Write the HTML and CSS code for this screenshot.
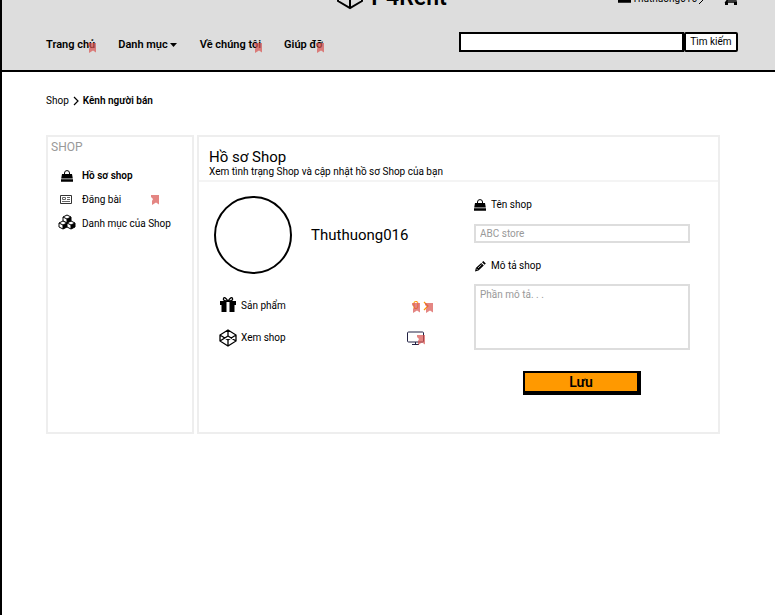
FILE: index.html
```html
<!DOCTYPE html>
<html lang="vi">
<head>
<meta charset="utf-8">
<meta name="viewport" content="width=device-width, initial-scale=1">
<title>Kênh người bán</title>
<link rel="stylesheet" href="styles.css">
</head>
<body>
<svg class="defs" aria-hidden="true">
  <symbol id="mark" viewBox="0 0 8 10"><path d="M0 0h8v9.500L5 7.500 1 10V6l1-2-2-2z"/></symbol>
  <symbol id="bag" viewBox="0 0 12 12"><path d="M1 4h10l.8 4.500H.2zM0 9.200h12v2.500H0z"/><path d="M3.500 5.500V3q0-2.400 2.500-2.400T8.500 3v2.500" fill="none" stroke="currentColor"/></symbol>
</svg>
<div class="page">
  <header class="header">
    <div class="topbar">
      <a class="brand" href="#">
        <svg class="brand-icon" viewBox="0 0 26 28" aria-hidden="true"><path d="M13 1l12 7v12l-12 7-12-7V8zM1 8l12 7 12-7M13 15v12" fill="none" stroke="currentColor" stroke-width="2"/></svg>
        <span>P4Rent</span>
      </a>
      <div class="account">
        <a class="user" href="#"><svg class="user-bag" aria-hidden="true"><use href="#bag"/></svg>Thuthuong016<svg class="user-next" viewBox="0 0 6 10" aria-hidden="true"><path d="M1 1l4 4-4 4" fill="none" stroke="currentColor"/></svg></a>
        <a href="#" aria-label="Giỏ hàng"><svg class="cart" viewBox="0 0 14 14" aria-hidden="true"><path d="M0 1h3l1 8h8l1-6H3M3.500 9L2 11h11" fill="none" stroke="currentColor" stroke-width="1.500"/><path d="M1 11h3v3H1zM10 11h3v3h-3z"/></svg></a>
      </div>
    </div>
    <div class="navbar">
      <nav class="nav">
        <a href="#">Trang chủ<svg class="mark over" aria-hidden="true"><use href="#mark"/></svg></a>
        <a href="#">Danh mục<svg class="caret" viewBox="0 0 7 4" aria-hidden="true"><path d="M0 0h7L3.500 4z"/></svg></a>
        <a href="#">Về chúng tôi<svg class="mark over" aria-hidden="true"><use href="#mark"/></svg></a>
        <a href="#">Giúp đỡ<svg class="mark over" aria-hidden="true"><use href="#mark"/></svg></a>
      </nav>
      <form class="search">
        <input type="search" aria-label="Tìm kiếm">
        <button type="button">Tìm kiếm</button>
      </form>
    </div>
  </header>

  <nav class="crumbs" aria-label="Breadcrumb">
    <a href="#">Shop</a>
    <svg class="crumb-sep" viewBox="0 0 6 10" aria-hidden="true"><path d="M1 1l4 4-4 4" fill="none" stroke="currentColor" stroke-width="1.200"/></svg>
    <strong>Kênh người bán</strong>
  </nav>

  <div class="columns">
    <aside class="panel side">
      <h2>SHOP</h2>
      <ul>
        <li><svg class="icon small" aria-hidden="true"><use href="#bag"/></svg><a class="current" href="#">Hồ sơ shop</a></li>
        <li><svg class="icon" viewBox="0 0 18 18" aria-hidden="true"><path d="M2.500 4.500h11v8h-11z" fill="none" stroke="#333"/><path d="M4.500 6.500h3v2h-3zM9 6.500h3M9 8.500h3M4 10.500h8" fill="none" stroke="#666"/></svg><a href="#">Đăng bài</a><svg class="mark trailing" aria-hidden="true"><use href="#mark"/></svg></li>
        <li><svg class="icon" viewBox="0 0 18 18" aria-hidden="true"><g fill="#fff" stroke="currentColor"><path id="cube" d="M9 0l4 2v4L9 8 5 6V2zM5 2l4 2 4-2M9 4v4"/><use href="#cube" x="-4" y="6"/><use href="#cube" x="4" y="6"/></g><path d="M9 4l4-2v4L9 8zM5 10l4-2v4l-4 2zM13 10l4-2v4l-4 2z"/></svg><a href="#">Danh mục của Shop</a></li>
      </ul>
    </aside>

    <main class="panel profile">
      <div class="profile-head">
        <h1>Hồ sơ Shop</h1>
        <p>Xem tình trạng Shop và cập nhật hồ sơ Shop của bạn</p>
      </div>
      <div class="profile-body">
        <section class="info">
          <div class="person"><div class="avatar"></div><span>Thuthuong016</span></div>
          <a class="row" href="#">
            <svg class="icon" viewBox="0 0 18 18" aria-hidden="true"><path d="M1 4h16v4H1zM2.500 8h13v7h-13z"/><path d="M7.500 5h3v10h-3z" fill="#fff"/><path d="M9 4Q3.500 4 4.500 1.500T9 4q3.500-5 4.500-2.500T9 4" fill="none" stroke="currentColor" stroke-width="1.300"/></svg>
            <span>Sản phẩm</span>
            <span class="count">0<svg class="count-next" viewBox="0 0 6 10" aria-hidden="true"><path d="M1 1l4 4-4 4" fill="none" stroke="currentColor" stroke-width="1.200"/></svg><svg class="mark first" aria-hidden="true"><use href="#mark"/></svg><svg class="mark over" aria-hidden="true"><use href="#mark"/></svg></span>
          </a>
          <a class="row" href="#">
            <svg class="icon" viewBox="0 0 18 18" aria-hidden="true"><path d="M9 1l8 5v6l-8 5-8-5V6zM1 6l8 5 8-5M1 12l8-5 8 5M9 1v6M9 11v6" fill="none" stroke="currentColor" stroke-width="1.300"/></svg>
            <span>Xem shop</span>
            <span class="screen"><svg viewBox="0 0 18 14" aria-hidden="true"><path d="M1.500 1h14q1 0 1 1v8q0 1-1 1h-14q-1 0-1-1V2q0-1 1-1zM5 13.500h7M8.500 11v2.500" fill="none" stroke="currentColor"/></svg><svg class="mark over" aria-hidden="true"><use href="#mark"/></svg></span>
          </a>
        </section>
        <form class="form">
          <label for="shop-name"><svg class="label-icon" aria-hidden="true"><use href="#bag"/></svg>Tên shop</label>
          <input id="shop-name" type="text" placeholder="ABC store">
          <label for="shop-desc"><svg class="label-icon" viewBox="0 0 12 12" aria-hidden="true"><path d="M1 11.500l.8-3.500 5.400-5 2.600 2.600-5.300 5zM8 2.200L9.300 1l2.500 2.500-1.200 1.300z"/><path d="M2.300 8.700l1.500 1.500M4 8l3.500-3.300" stroke="#fff" stroke-width=".7"/></svg>Mô tả shop</label>
          <textarea id="shop-desc" placeholder="Phần mô tả. . ."></textarea>
          <button type="button">Lưu</button>
        </form>
      </div>
    </main>
  </div>
</div>
</body>
</html>
```
FILE: styles.css
```css
* { box-sizing: border-box; }
body {
  margin: 0;
  background: #fff;
  color: #000;
  font-family: Roboto, "Liberation Sans", sans-serif;
  font-size: 10px;
  line-height: 14px;
}
a { color: inherit; text-decoration: none; }
h1, h2, p, ul { margin: 0; padding: 0; font-weight: 400; }
svg { fill: currentColor; flex: none; overflow: visible; }
input, textarea, button { font: inherit; color: inherit; border-radius: 0; }
.defs { position: absolute; width: 0; height: 0; }

.page { min-height: 100vh; border-left: 2px solid #000; }
.header {
  padding: 0 37px 18px 44px;
  background: #ddd;
  border-bottom: 2px solid #000;
}
.topbar {
  display: grid;
  grid-template-columns: 1fr auto 1fr;
  grid-template-rows: 10px;
  align-items: end;
  height: 10px;
}
.brand {
  grid-column: 2;
  display: flex;
  align-items: end;
  gap: 8px;
  font-size: 23px;
  line-height: 24px;
  font-weight: 600;
}
.brand-icon { width: 26px; height: 28px; margin-bottom: 1px; }
.account { display: flex; justify-content: flex-end; align-items: end; gap: 20px; }
.user { display: flex; align-items: end; gap: 1px; padding-bottom: 4px; }
.user-bag { width: 13px; height: 13px; margin-bottom: 3px; }
.user-next { width: 6px; height: 10px; margin-bottom: 1px; }
.cart { display: block; width: 14px; height: 14px; margin-bottom: 5px; }

.navbar { display: flex; justify-content: space-between; align-items: center; gap: 20px; padding-top: 21px; }
.nav { display: flex; gap: 23px; font-size: 11px; font-weight: 600; padding-top: 7px; }
.nav a { display: flex; align-items: center; gap: 2px; position: relative; }
.nav .mark.over { right: -1px; bottom: -1px; }
.caret { width: 7px; height: 4px; }
.mark { width: 8px; height: 10px; fill: #d9534f; opacity: .7; }
.mark.over { position: absolute; right: 0; bottom: 0; }
.mark.first { position: absolute; left: 0; bottom: 0; }
.search { display: flex; flex: 0 1 279px; }
.search input { flex: 1; min-width: 0; height: 20px; padding: 0 4px; border: 2px solid #000; background: #fff; }
.search button { width: 54px; height: 20px; padding: 0; border: 2px solid #000; border-radius: 2px; background: #fff; line-height: 14px; }

.crumbs { display: flex; align-items: center; gap: 4px; padding: 22px 44px 20px; }
.crumb-sep { width: 6px; height: 10px; }
.crumbs strong { font-weight: 600; }

.columns {
  display: grid;
  grid-template-columns: 148px 1fr;
  gap: 3px;
  padding: 7px 55px 20px 44px;
}
.panel { min-height: 299px; border: 2px solid #eee; }
.side { padding: 3px; }
.side h2 { font-size: 12px; line-height: 14px; color: #999; }
.side ul { list-style: none; padding: 10px 0 0 7px; }
.side li { display: flex; align-items: center; gap: 6px; height: 24px; white-space: nowrap; }
.icon { width: 18px; height: 18px; }
.icon.small { height: 12px; }
.side .current { font-weight: 600; }
.mark.trailing { margin-left: 24px; }

.profile-head { padding: 11px 10px 3px; border-bottom: 2px solid #f4f4f4; }
.profile-head h1 { font-size: 15px; line-height: 18px; }
.profile-head p { line-height: 11px; }
.profile-body { display: grid; grid-template-columns: 1fr 216px; gap: 41px; padding: 14px 28px 10px 15px; }
.person { display: flex; align-items: center; gap: 19px; font-size: 15px; line-height: 18px; margin-bottom: 16px; }
.avatar { width: 78px; height: 78px; border: 2px solid #000; border-radius: 50%; }
.row { display: flex; align-items: center; gap: 4px; height: 32px; padding-left: 5px; }
.count, .screen { display: flex; align-items: center; position: relative; margin-left: auto; color: #f90; }
.count { width: 21px; gap: 4px; padding-left: 1px; font-size: 11px; }
.screen { color: #224; margin-right: 8px; }
.screen svg:first-child { width: 18px; height: 14px; }
.count-next { width: 6px; height: 10px; }

.form { display: flex; flex-direction: column; }
.form label { display: flex; align-items: center; gap: 5px; height: 18px; }
.label-icon { width: 12px; height: 12px; }
.form input, .form textarea { width: 100%; border: 2px solid #ddd; background: #fff; padding: 0 4px; resize: none; }
.form input { height: 19px; margin: 10px 0 14px; }
.form textarea { display: block; height: 66px; margin: 9px 0 21px; padding-top: 2px; }
::placeholder { color: #999; opacity: 1; }
.form button { align-self: center; width: 118px; height: 24px; padding: 0; border: 2px solid #000; border-width: 2px 4px 4px 2px; background: #f90; font-size: 14px; font-weight: 600; line-height: 16px; }
```
